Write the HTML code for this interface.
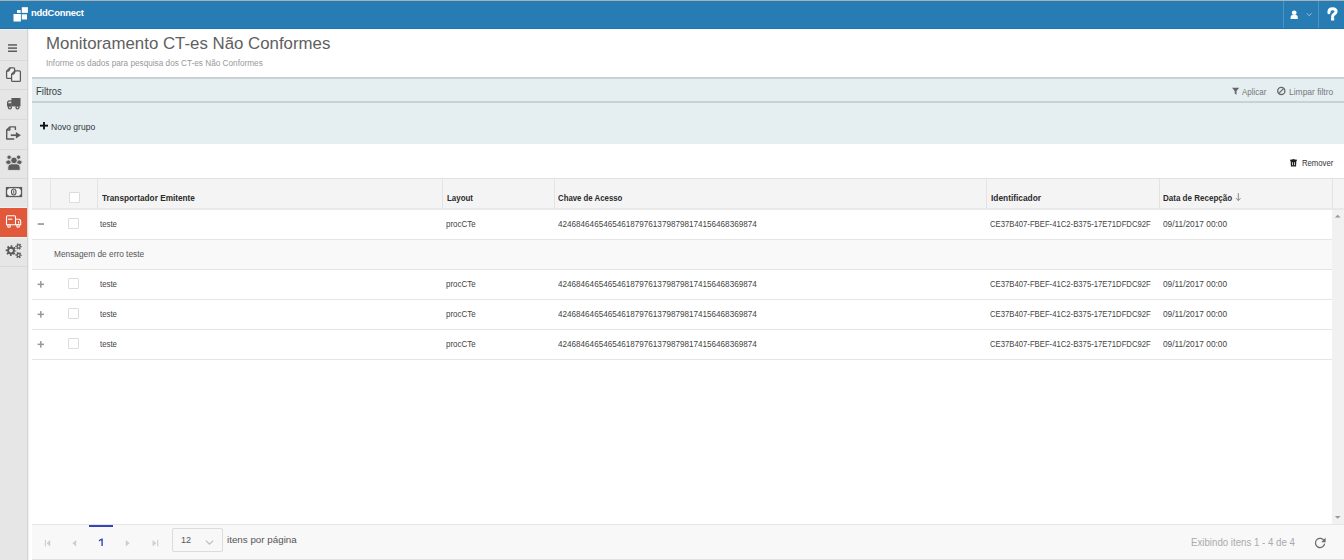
<!DOCTYPE html>
<html><head><meta charset="utf-8">
<style>
*{box-sizing:border-box;margin:0;padding:0}
html,body{width:1344px;height:560px;overflow:hidden;background:#fff;font-family:"Liberation Sans",sans-serif;color:#333}
.a{position:absolute}
.t{position:absolute;white-space:nowrap;line-height:1}
#topline{left:0;top:0;width:1344px;height:1px;background:#a9b1b8}
#hdr{left:0;top:1px;width:1344px;height:28px;background:#287cb4;border-bottom:1px solid #1f73ae}
.hsep{top:1px;width:1px;height:27px;background:#4d93c6}
#side{left:0;top:29px;width:27px;height:531px;background:#e6e6e6;border-top:1px solid #f3eeea}
#sideb{left:27px;top:29px;width:1px;height:531px;background:#d6d6d6}
#sideshadow{left:28px;top:29px;width:2px;height:531px;background:linear-gradient(to right,#ededed,#fff)}
.ssep{left:0;width:27px;height:1px;background:#d9d9d9}
#filt{left:32px;top:77px;width:1312px;height:67px;background:#e5eff2;border-top:2px solid #c8d1d4}
#filtb{left:32px;top:101px;width:1312px;height:2px;background:#c8d1d4}
#tbl{left:32px;top:178px;width:1312px;height:1px;background:#e2e2e2}
#thead{left:32px;top:179px;width:1312px;height:31px;background:#f4f4f4;border-bottom:2px solid #e9e9e9}
.csep{top:179px;width:1px;height:30px;background:#e3e3e3}
.rowb{left:32px;width:1300px;height:1px;background:#e5e5e5}
.cb{width:11px;height:11px;border:1px solid #dcdcdc;border-radius:1px;background:#fff}
.cell{font-size:8.2px;color:#333}
.hcell{font-size:8.6px;font-weight:bold;color:#2b2b2b}
#msgrow{left:32px;top:240px;width:1300px;height:29px;background:#f9f9f9}
#scroll{left:1332px;top:210px;width:12px;height:315px;background:#f1f1f1}
#foot{left:32px;top:524px;width:1312px;height:36px;background:#f8f8f8;border-top:1px solid #e6e6e6;border-bottom:1px solid #e2e2e2}
</style></head><body>
<div class="a" id="topline"></div>
<div class="a" id="hdr"></div>
<!-- logo -->

<div class="a hsep" style="left:1283px"></div>
<div class="a hsep" style="left:1318px"></div>

<div class="a" id="side"></div>
<div class="a" id="sideb"></div>
<div class="a" id="sideshadow"></div>
<div class="a ssep" style="top:60px"></div>
<div class="a ssep" style="top:89px"></div>
<div class="a ssep" style="top:119px"></div>
<div class="a ssep" style="top:149px"></div>
<div class="a ssep" style="top:178px"></div>
<div class="a ssep" style="top:207px;background:#f0f4f5"></div>
<div class="a" style="left:0;top:208px;width:27px;height:29px;background:#e2583a"></div>
<div class="a ssep" style="top:237px;background:#f0f4f5"></div>
<div class="a ssep" style="top:266px"></div>


<div class="a" id="filt"></div>
<div class="a" id="filtb"></div>

<div class="a" id="tbl"></div>
<div class="a" id="thead"></div>
<div class="a csep" style="left:50px"></div>
<div class="a csep" style="left:97px"></div>
<div class="a csep" style="left:442px"></div>
<div class="a csep" style="left:554px"></div>
<div class="a csep" style="left:986px"></div>
<div class="a csep" style="left:1159px"></div>
<div class="a csep" style="left:1332px"></div>
<div class="a cb" style="left:68.5px;top:192px"></div>


<div class="a" id="msgrow"></div>
<div class="a rowb" style="top:239px"></div>
<div class="a rowb" style="top:269px"></div>
<div class="a rowb" style="top:299px"></div>
<div class="a rowb" style="top:329px"></div>
<div class="a rowb" style="top:359px"></div>

<div class="a cb" style="left:68px;top:218px"></div>
<div class="a cb" style="left:68px;top:278px"></div>
<div class="a cb" style="left:68px;top:308px"></div>
<div class="a cb" style="left:68px;top:338px"></div>

<div class="a" id="scroll"></div>
<div class="a" id="foot"></div>
<div class="a" style="left:89px;top:524.5px;width:24px;height:2px;background:#3445b8"></div>
<div class="a" style="left:172px;top:528px;width:51px;height:24px;border:1px solid #dcdcdc;border-radius:2px;background:#f8f8f8"></div>
<svg class="a" style="left:0;top:0" width="1344" height="560" viewBox="0 0 1344 560">
<g fill="#fff"><rect x="13.5" y="14" width="7.4" height="7.5"/><rect x="17" y="10.1" width="3.7" height="2.8"/><rect x="21.8" y="7.2" width="6.1" height="5.7"/><rect x="21.8" y="14.3" width="5.2" height="5.2"/></g>
<!-- hamburger -->
<g fill="#5c5c5c"><rect x="8" y="44.2" width="9" height="1.5"/><rect x="8" y="47.35" width="9" height="1.5"/><rect x="8" y="50.5" width="9" height="1.5"/></g>
<!-- docs -->
<g stroke="#5a5a5a" stroke-width="1.25" fill="#f0f0f0" stroke-linejoin="round">
<path d="M6.6,71.2 L10,67.8 H13.6 Q14.6,67.8 14.6,68.8 V77.4 Q14.6,78.4 13.6,78.4 H7.6 Q6.6,78.4 6.6,77.4 Z"/><path d="M6.6,71.2 Q9.9,71.4 10,67.8" fill="none"/>
<path d="M11.6,74.2 L15,70.8 H19.4 Q20.4,70.8 20.4,71.8 V80.4 Q20.4,81.4 19.4,81.4 H12.6 Q11.6,81.4 11.6,80.4 Z"/><path d="M11.6,74.2 Q14.9,74.4 15,70.8" fill="none"/>
</g>
<!-- truck dark -->
<g fill="#5a5a5a">
<rect x="11.4" y="98" width="9.1" height="8.4"/>
<path d="M11.6,100.2 H9.4 Q7,100.2 7,103 V106.4 H11.6 Z"/>
<path d="M8.1,103.2 Q8.1,101.4 9.6,101.4 H11 V103.2 Z" fill="#dcdcdc"/>
<circle cx="9.9" cy="107.4" r="2.1"/>
<circle cx="17.5" cy="107.4" r="2.1"/>
<circle cx="9.9" cy="107.4" r="0.8" fill="#e6e6e6"/><circle cx="17.5" cy="107.4" r="0.8" fill="#e6e6e6"/>
</g>
<!-- export -->
<g stroke="#5a5a5a" stroke-width="1.4" fill="none" stroke-linejoin="round">
<path d="M15.4,130 V126.9 H9.8 L6.7,130 V139 H14.2"/>
<path d="M6.7,130 H9.8 V126.9"/>
<path d="M10.8,135.2 H17.4" stroke-width="1.7"/>
</g>
<path d="M15.9,131.9 L20.9,135.2 L15.9,138.5 Z" fill="#5a5a5a"/>
<!-- people -->
<g fill="#5c5c5c" stroke="#e6e6e6" stroke-width="0.9">
<circle cx="9.1" cy="157.2" r="2.2"/><circle cx="18.6" cy="157.2" r="2.2"/>
<ellipse cx="8.5" cy="162.2" rx="2.8" ry="2.3"/><ellipse cx="19.3" cy="162.2" rx="2.8" ry="2.3"/>
<circle cx="14" cy="160.4" r="3.3"/>
<path d="M7.8,170.4 V167.2 Q7.8,163.8 11.4,163.8 H16.6 Q20.2,163.8 20.2,167.2 V170.4 Z"/>
</g>
<!-- money -->
<rect x="6.5" y="187.6" width="15" height="8.9" fill="#f4f4f4" stroke="#5a5a5a" stroke-width="1.3"/>
<g fill="#5a5a5a">
<path d="M6.5,187.6 H9.6 L6.5,190.7 Z"/><path d="M21.5,187.6 H18.4 L21.5,190.7 Z"/>
<path d="M6.5,196.5 H9.6 L6.5,193.4 Z"/><path d="M21.5,196.5 H18.4 L21.5,193.4 Z"/>
<rect x="13.25" y="190.3" width="1" height="3.4"/>
</g>
<ellipse cx="13.75" cy="192.05" rx="2.3" ry="3" fill="none" stroke="#5a5a5a" stroke-width="1.1"/>
<!-- red truck white outline -->
<g stroke="#fff" stroke-width="1.1" fill="none" stroke-linejoin="round">
<path d="M6.5,224.7 V216.8 Q6.5,215.7 7.6,215.7 H14.4 Q15.5,215.7 15.5,216.8 V224.7 Z"/>
<path d="M15.5,219.3 H18.6 Q20.7,219.3 20.7,221.8 V224.7 H15.5"/>
<path d="M7.9,219.2 H12.3"/>
<path d="M18.6,221.2 V223.4"/>
<circle cx="9" cy="225.9" r="1.3" fill="#e2583a"/>
<circle cx="18.1" cy="225.9" r="1.3" fill="#e2583a"/>
</g>
<!-- gears -->
<g fill="none" stroke="#5a5a5a">
<circle cx="11" cy="250.6" r="4.3" stroke-width="2.0" stroke-dasharray="1.689 1.689" stroke-dashoffset="0.845"/>
<circle cx="11" cy="250.6" r="2.9" stroke-width="2.0"/>
<circle cx="18.6" cy="246.5" r="2.5" stroke-width="1.4" stroke-dasharray="1.309 1.309" stroke-dashoffset="0.65"/>
<circle cx="18.6" cy="246.5" r="1.6" stroke-width="1.3"/>
<circle cx="18.6" cy="255.1" r="2.5" stroke-width="1.4" stroke-dasharray="1.309 1.309" stroke-dashoffset="0.65"/>
<circle cx="18.6" cy="255.1" r="1.6" stroke-width="1.3"/>
</g>
<!-- header user -->
<g fill="#fff">
<ellipse cx="1294.2" cy="12.8" rx="2.4" ry="2.2"/>
<path d="M1290.6,19 V17 Q1290.6,15 1292.6,15 H1295.8 Q1297.8,15 1297.8,17 V19 Z"/>
</g>
<path d="M1306.8,13.2 L1309.2,15.8 L1311.6,13.2" stroke="#9cc4e2" stroke-width="0.9" fill="none"/>
<!-- funnel -->
<path d="M1232,87.8 H1239.2 L1236.5,91 V94.8 L1234.7,93.6 V91 Z" fill="#666"/>
<!-- ban -->
<g stroke="#666" stroke-width="1.3" fill="none"><circle cx="1281.3" cy="90.9" r="3.6"/><path d="M1283.8,88.4 L1278.8,93.4"/></g>
<!-- plus novo grupo -->
<g fill="#111"><rect x="40" y="124.7" width="8" height="1.9"/><rect x="43.05" y="122" width="1.9" height="7.4"/></g>
<!-- trash -->
<g fill="#1e1e1e"><rect x="1290.2" y="159.6" width="6.6" height="1.5"/><rect x="1292.4" y="159" width="2.2" height="0.8"/>
<path d="M1290.7,161 H1296.3 L1296.1,166.6 H1290.9 Z"/></g>
<g fill="#f4f4f4"><rect x="1292.15" y="162.2" width="0.8" height="3.1"/><rect x="1294.05" y="162.2" width="0.8" height="3.1"/></g>
<!-- minus / plus rows -->
<rect x="37.7" y="223.2" width="6.3" height="1.7" fill="#9a9a9a"/>
<g fill="#999">
<rect x="37.6" y="283.6" width="6.4" height="1.5"/><rect x="40.05" y="281.1" width="1.5" height="6.6"/>
<rect x="37.6" y="313.6" width="6.4" height="1.5"/><rect x="40.05" y="311.1" width="1.5" height="6.6"/>
<rect x="37.6" y="343.6" width="6.4" height="1.5"/><rect x="40.05" y="341.1" width="1.5" height="6.6"/>
</g>
<!-- scroll arrows -->
<path d="M1334.8,217.6 L1337.7,214.8 L1340.6,217.6 Z" fill="#999"/>
<path d="M1334.8,516 L1337.7,518.8 L1340.6,516 Z" fill="#999"/>
<!-- pagination arrows -->
<g fill="#cdcdcd">
<rect x="44.9" y="539.9" width="1.1" height="6.5"/><path d="M50.2,539.9 V546.4 L46.6,543.15 Z"/>
<path d="M76.2,539.9 V546.4 L72.4,543.15 Z"/>
<path d="M125.8,539.9 V546.4 L129.6,543.15 Z"/>
<path d="M152.6,539.9 V546.4 L156.2,543.15 Z"/><rect x="157.1" y="539.9" width="1.1" height="6.5"/>
</g>
<path d="M205.8,540.6 L209.5,544.2 L213.2,540.6" stroke="#bbb" stroke-width="1.1" fill="none"/>
<path d="M101.4,546.1 V540.2 L98.9,541.4 V540 L101.7,538.6 H102.8 V546.1 Z" fill="#2f47b4"/>
<!-- refresh -->
<g stroke="#6a6a6a" stroke-width="1.25" fill="none"><path d="M1324.2,541 A4.6,4.6 0 1 0 1324.6,543.6"/></g>
<path d="M1325.6,537.8 V542.2 H1321.2 Z" fill="#6a6a6a"/>
<path d="M1328.9,12.6 C1328.9,10 1330.6,8.75 1332.6,8.75 C1334.8,8.75 1336.05,10 1336.05,11.7 C1336.05,13.9 1332.6,14.2 1332.6,16.4" stroke="#fff" stroke-width="3.1" fill="none" stroke-linecap="round"/>
<rect x="1331" y="17.5" width="3.2" height="3" fill="#fff"/>
<path d="M1238.3,193.2 V200.4 M1236.1,198.2 L1238.3,200.6 L1240.5,198.2" stroke="#7a7a7a" stroke-width="0.9" fill="none"/>
</svg>
<div class="t" id="t0" style="left:31.20px;top:8.47px;font-size:9.6px;font-weight:bold;color:#fff;transform:scaleX(0.9815);transform-origin:0 0;letter-spacing:-0.22px">nddConnect</div>
<div class="t" id="t1" style="left:45.60px;top:35.69px;font-size:16.9px;font-weight:normal;color:#606060;transform:scaleX(0.9965);transform-origin:0 0;">Monitoramento CT-es Não Conformes</div>
<div class="t" id="t2" style="left:46.00px;top:58.70px;font-size:8.5px;font-weight:normal;color:#999;transform:scaleX(0.9658);transform-origin:0 0;">Informe os dados para pesquisa dos CT-es Não Conformes</div>
<div class="t" id="t3" style="left:35.60px;top:86.77px;font-size:10.2px;font-weight:normal;color:#3a3a3a;transform:scaleX(0.9314);transform-origin:0 0;">Filtros</div>
<div class="t" id="t4" style="left:1242.20px;top:87.97px;font-size:8.3px;font-weight:normal;color:#777;transform:scaleX(0.9615);transform-origin:0 0;">Aplicar</div>
<div class="t" id="t5" style="left:1288.80px;top:87.97px;font-size:8.3px;font-weight:normal;color:#777;transform:scaleX(1.0211);transform-origin:0 0;">Limpar filtro</div>
<div class="t" id="t6" style="left:51.00px;top:122.50px;font-size:8.5px;font-weight:normal;color:#333;transform:scaleX(1.0068);transform-origin:0 0;">Novo grupo</div>
<div class="t" id="t7" style="left:1302.00px;top:159.14px;font-size:8.7px;font-weight:normal;color:#333;transform:scaleX(0.8888);transform-origin:0 0;">Remover</div>
<div class="t" id="t8" style="left:101.60px;top:193.54px;font-size:8.7px;font-weight:bold;color:#2b2b2b;transform:scaleX(0.9485);transform-origin:0 0;">Transportador Emitente</div>
<div class="t" id="t9" style="left:446.80px;top:193.54px;font-size:8.7px;font-weight:bold;color:#2b2b2b;transform:scaleX(0.9117);transform-origin:0 0;">Layout</div>
<div class="t" id="t10" style="left:557.60px;top:193.54px;font-size:8.7px;font-weight:bold;color:#2b2b2b;transform:scaleX(0.8986);transform-origin:0 0;">Chave de Acesso</div>
<div class="t" id="t11" style="left:990.60px;top:193.54px;font-size:8.7px;font-weight:bold;color:#2b2b2b;transform:scaleX(0.9598);transform-origin:0 0;">Identificador</div>
<div class="t" id="t12" style="left:1163.40px;top:193.54px;font-size:8.7px;font-weight:bold;color:#2b2b2b;transform:scaleX(0.9238);transform-origin:0 0;">Data de Recepção</div>
<div class="t" id="t13" style="left:54.00px;top:249.70px;font-size:8.5px;font-weight:normal;color:#555;transform:scaleX(0.9783);transform-origin:0 0;">Mensagem de erro teste</div>
<div class="t" id="t14" style="left:100.00px;top:220.12px;font-size:8.6px;font-weight:normal;color:#444;transform:scaleX(0.9061);transform-origin:0 0;">teste</div>
<div class="t" id="t15" style="left:446.00px;top:220.12px;font-size:8.6px;font-weight:normal;color:#444;transform:scaleX(0.9282);transform-origin:0 0;">procCTe</div>
<div class="t" id="t16" style="left:557.60px;top:220.12px;font-size:8.6px;font-weight:normal;color:#444;transform:scaleX(0.9450);transform-origin:0 0;">42468464654654618797613798798174156468369874</div>
<div class="t" id="t17" style="left:990.00px;top:220.12px;font-size:8.6px;font-weight:normal;color:#444;transform:scaleX(0.8976);transform-origin:0 0;">CE37B407-FBEF-41C2-B375-17E71DFDC92F</div>
<div class="t" id="t18" style="left:1162.80px;top:220.12px;font-size:8.6px;font-weight:normal;color:#444;transform:scaleX(0.9668);transform-origin:0 0;">09/11/2017 00:00</div>
<div class="t" id="t19" style="left:100.00px;top:280.12px;font-size:8.6px;font-weight:normal;color:#444;transform:scaleX(0.9061);transform-origin:0 0;">teste</div>
<div class="t" id="t20" style="left:446.00px;top:280.12px;font-size:8.6px;font-weight:normal;color:#444;transform:scaleX(0.9282);transform-origin:0 0;">procCTe</div>
<div class="t" id="t21" style="left:557.60px;top:280.12px;font-size:8.6px;font-weight:normal;color:#444;transform:scaleX(0.9450);transform-origin:0 0;">42468464654654618797613798798174156468369874</div>
<div class="t" id="t22" style="left:990.00px;top:280.12px;font-size:8.6px;font-weight:normal;color:#444;transform:scaleX(0.8976);transform-origin:0 0;">CE37B407-FBEF-41C2-B375-17E71DFDC92F</div>
<div class="t" id="t23" style="left:1162.80px;top:280.12px;font-size:8.6px;font-weight:normal;color:#444;transform:scaleX(0.9668);transform-origin:0 0;">09/11/2017 00:00</div>
<div class="t" id="t24" style="left:100.00px;top:310.12px;font-size:8.6px;font-weight:normal;color:#444;transform:scaleX(0.9061);transform-origin:0 0;">teste</div>
<div class="t" id="t25" style="left:446.00px;top:310.12px;font-size:8.6px;font-weight:normal;color:#444;transform:scaleX(0.9282);transform-origin:0 0;">procCTe</div>
<div class="t" id="t26" style="left:557.60px;top:310.12px;font-size:8.6px;font-weight:normal;color:#444;transform:scaleX(0.9450);transform-origin:0 0;">42468464654654618797613798798174156468369874</div>
<div class="t" id="t27" style="left:990.00px;top:310.12px;font-size:8.6px;font-weight:normal;color:#444;transform:scaleX(0.8976);transform-origin:0 0;">CE37B407-FBEF-41C2-B375-17E71DFDC92F</div>
<div class="t" id="t28" style="left:1162.80px;top:310.12px;font-size:8.6px;font-weight:normal;color:#444;transform:scaleX(0.9668);transform-origin:0 0;">09/11/2017 00:00</div>
<div class="t" id="t29" style="left:100.00px;top:340.12px;font-size:8.6px;font-weight:normal;color:#444;transform:scaleX(0.9061);transform-origin:0 0;">teste</div>
<div class="t" id="t30" style="left:446.00px;top:340.12px;font-size:8.6px;font-weight:normal;color:#444;transform:scaleX(0.9282);transform-origin:0 0;">procCTe</div>
<div class="t" id="t31" style="left:557.60px;top:340.12px;font-size:8.6px;font-weight:normal;color:#444;transform:scaleX(0.9450);transform-origin:0 0;">42468464654654618797613798798174156468369874</div>
<div class="t" id="t32" style="left:990.00px;top:340.12px;font-size:8.6px;font-weight:normal;color:#444;transform:scaleX(0.8976);transform-origin:0 0;">CE37B407-FBEF-41C2-B375-17E71DFDC92F</div>
<div class="t" id="t33" style="left:1162.80px;top:340.12px;font-size:8.6px;font-weight:normal;color:#444;transform:scaleX(0.9668);transform-origin:0 0;">09/11/2017 00:00</div>
<div class="t" id="t34" style="left:181.00px;top:535.63px;font-size:9.3px;font-weight:normal;color:#555;transform:scaleX(0.9703);transform-origin:0 0;">12</div>
<div class="t" id="t35" style="left:227.20px;top:535.14px;font-size:9.4px;font-weight:normal;color:#555;transform:scaleX(1.0448);transform-origin:0 0;">itens por página</div>
<div class="t" id="t36" style="left:1190.60px;top:537.53px;font-size:10.0px;font-weight:normal;color:#aaa;transform:scaleX(0.9692);transform-origin:0 0;">Exibindo itens 1 - 4 de 4</div>
</body></html>
